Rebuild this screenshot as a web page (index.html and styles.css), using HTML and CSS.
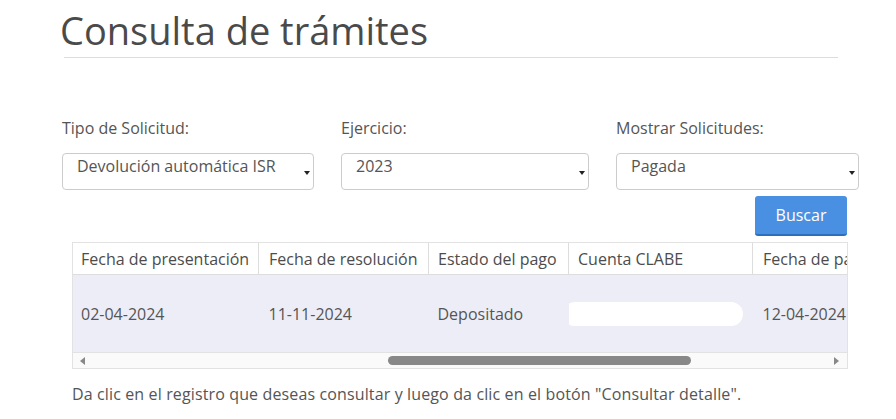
FILE: index.html
```html
<!DOCTYPE html>
<html lang="es">
<head>
    <meta charset="UTF-8">
    <meta name="viewport" content="width=device-width, initial-scale=1.0">
    <title>Consulta de trámites</title>
    <link rel="stylesheet" href="styles.css">
</head>
<body>
    <div class="page">
        <div class="page-title">
            <h1>Consulta de trámites</h1>
        </div>

        <!-- Filtros -->
        <div class="filters">
            <div class="field">
                <label>Tipo de Solicitud:</label>
                <div class="select"><span>Devolución automática ISR</span><i class="caret"></i></div>
            </div>
            <div class="field">
                <label>Ejercicio:</label>
                <div class="select"><span>2023</span><i class="caret"></i></div>
            </div>
            <div class="field">
                <label>Mostrar Solicitudes:</label>
                <div class="select"><span>Pagada</span><i class="caret"></i></div>
            </div>
        </div>

        <div class="actions">
            <button class="btn-primary">Buscar</button>
        </div>

        <!-- Resultados -->
        <div class="results">
            <div class="table-wrap">
                <table>
                    <thead>
                        <tr>
                            <th class="c1">Fecha de presentación</th>
                            <th class="c2">Fecha de resolución</th>
                            <th class="c3">Estado del pago</th>
                            <th class="c4">Cuenta CLABE</th>
                            <th class="c5">Fecha de pago</th>
                        </tr>
                    </thead>
                    <tbody>
                        <tr>
                            <td>02-04-2024</td>
                            <td>11-11-2024</td>
                            <td>Depositado</td>
                            <td><span class="hidden-value"></span></td>
                            <td>12-04-2024</td>
                        </tr>
                    </tbody>
                </table>
            </div>
            <div class="hscroll">
                <i class="arrow-left"></i>
                <div class="track"><div class="thumb"></div></div>
                <i class="arrow-right"></i>
            </div>
        </div>

        <p class="hint">Da clic en el registro que deseas consultar y luego da clic en el botón "Consultar detalle".</p>
    </div>
</body>
</html>
```

FILE: styles.css
```css
body {
    margin: 0;
    font-family: "Open Sans", "Liberation Sans", sans-serif;
    color: #555;
    background: #fff;
}
.page {
    padding: 9px 0 0 60px;
    width: 800px;
}
.page-title {
    width: 774px;
    margin-left: 4px;
    border-bottom: 1px solid #ddd;
    padding-bottom: 6px;
}
h1 {
    margin: 0 0 0 -4px;
    font-size: 38px;
    font-weight: 400;
    line-height: 42px;
    color: #4a4a4a;
}
.filters {
    display: grid;
    grid-template-columns: 252px 248px 243px;
    column-gap: 27px;
    margin: 60px 0 0 2px;
}
.field label {
    display: block;
    font-size: 16px;
    line-height: 20px;
    margin-bottom: 15px;
}
.select {
    position: relative;
    border: 1px solid #ccc;
    border-radius: 4px;
    padding: 2px 0 0 14px;
    box-sizing: border-box;
    height: 37px;
    font-size: 16px;
    line-height: 20px;
}
.caret {
    position: absolute;
    right: 3px;
    top: 17px;
    width: 0;
    height: 0;
    border-left: 3px solid transparent;
    border-right: 3px solid transparent;
    border-top: 4px solid #222;
}
.actions {
    display: flex;
    justify-content: flex-end;
    width: 787px;
    margin-top: 6px;
}
.btn-primary {
    width: 92px;
    height: 40px;
    background-color: #4a90e2;
    border: none;
    border-bottom: 2px solid #2d6fbf;
    border-radius: 3px;
    color: #fff;
    font-family: inherit;
    font-size: 16px;
    padding: 0;
}
.results {
    margin: 6px 0 0 12px;
    width: 776px;
    border: 1px solid #e2e2e2;
    box-sizing: border-box;
}
.table-wrap {
    overflow: hidden;
}
table {
    border-collapse: collapse;
    table-layout: fixed;
    width: 830px;
    font-size: 16px;
}
th, td {
    text-align: left;
    padding: 0 0 0 8px;
    white-space: nowrap;
    overflow: hidden;
    font-weight: 400;
}
th {
    height: 31px;
    border-right: 1px solid #ddd;
    border-bottom: 1px solid #ddd;
    background: #fff;
    color: #4c4c4c;
}
th.c1 { width: 177px; }
th.c2 { width: 159px; padding-left: 10px; }
th.c3 { width: 130px; padding-left: 9px; }
th.c4 { width: 174px; padding-left: 9px; }
th.c5 { border-right: none; padding-left: 10px; }
td {
    height: 77px;
    background: #ededf7;
}
td:nth-child(2) { padding-left: 10px; }
td:nth-child(3), td:nth-child(4) { padding-left: 9px; }
td:nth-child(5) { padding-left: 10px; }
.hidden-value {
    display: inline-block;
    width: 180px;
    height: 24px;
    margin-left: -15px;
    background: #fff;
    border-radius: 12px;
    vertical-align: middle;
}
.hscroll {
    display: flex;
    align-items: center;
    height: 15px;
    background: #fafafa;
    border-top: 1px solid #e2e2e2;
}
.arrow-left, .arrow-right {
    width: 0;
    height: 0;
    border-top: 4px solid transparent;
    border-bottom: 4px solid transparent;
}
.arrow-left {
    margin-left: 7px;
    border-right: 5px solid #888;
}
.arrow-right {
    margin-right: 8px;
    border-left: 5px solid #888;
}
.track {
    flex: 1;
    padding-left: 303px;
}
.thumb {
    width: 303px;
    height: 9px;
    background: #888;
    border-radius: 5px;
}
.hint {
    margin: 15px 0 0 12px;
    font-size: 16px;
    line-height: 20px;
    letter-spacing: 0.13px;
}
```
